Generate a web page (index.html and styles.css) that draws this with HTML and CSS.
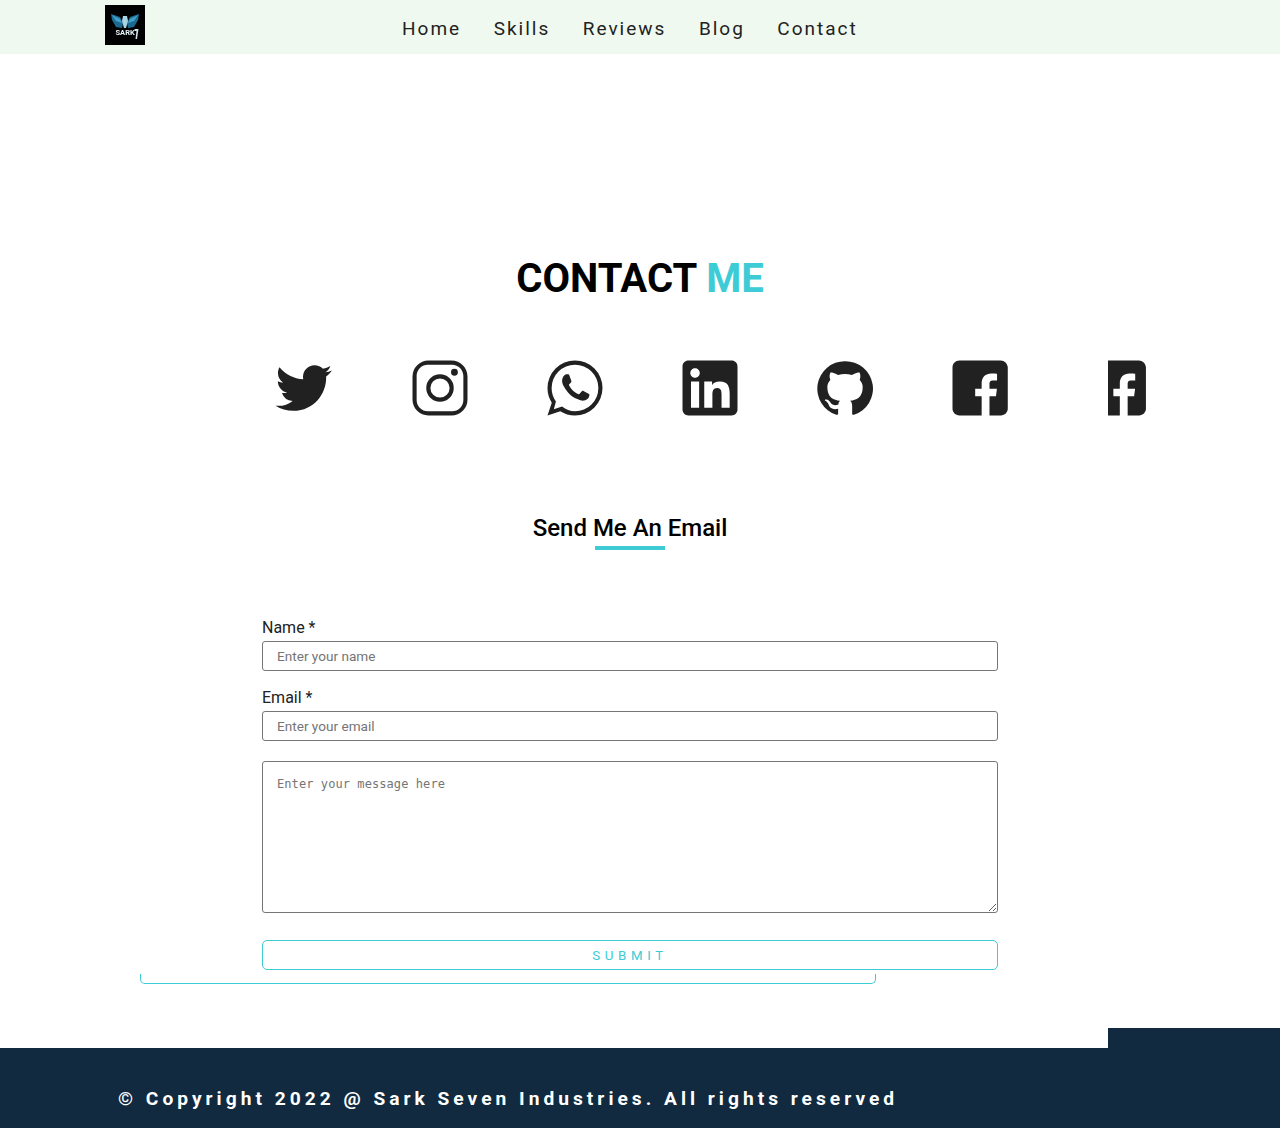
FILE: index.html
```html
<!DOCTYPE html>
<html lang="en">
<head>
  <meta charset="UTF-8" />
  <title>Sark Seven - Contact</title>
  <link rel="stylesheet" href="styles.css">
</head>
<body>

  <nav class="navbar">
    <svg class="logo" viewBox="0 0 40 40">
      <defs>
        <filter id="soft"><feGaussianBlur stdDeviation="0.45" /></filter>
      </defs>
      <rect width="40" height="40" fill="#000" />
      <g filter="url(#soft)">
        <path d="M6 9l9 3 3 6-1 5-6-1-4-7z" fill="#1f6a92" />
        <path d="M34 9l-9 3-3 6 1 5 6-1 4-7z" fill="#1f6a92" />
        <path d="M7 10l8 4 2 4-6-2z" fill="#3f9fcb" />
        <path d="M33 10l-8 4-2 4 6-2z" fill="#3f9fcb" />
        <path d="M18 11h4l1 5-2 7h-2l-2-7z" fill="#a8d5e5" />
        <text class="logo-text" x="10.500" y="30">SARK</text>
        <path d="M29.500 24h4l-1.500 10h-1.500l1-8h-2z" fill="#cfe6ee" />
      </g>
    </svg>
    <ul class="nav-links">
      <li>Home</li>
      <li>Skills</li>
      <li>Reviews</li>
      <li>Blog</li>
      <li>Contact</li>
    </ul>
  </nav>

  <section class="contact">
    <h1>CONTACT <span>ME</span></h1>

    <div class="socials">
      <svg class="icon twitter" viewBox="0.580 1.350 22.300 22.300"><path d="M22.460 6c-.77.35-1.600.58-2.460.69.88-.53 1.560-1.370 1.880-2.380-.83.5-1.750.85-2.720 1.050C18.370 4.500 17.260 4 16 4c-2.350 0-4.270 1.920-4.270 4.290 0 .34.04.67.11.98C8.280 9.090 5.110 7.380 3 4.790c-.37.63-.58 1.370-.58 2.150 0 1.490.75 2.810 1.910 3.560-.71 0-1.370-.2-1.950-.5v.03c0 2.080 1.480 3.820 3.440 4.210a4.220 4.220 0 0 1-1.930.07 4.280 4.280 0 0 0 4 2.980 8.521 8.521 0 0 1-5.330 1.840c-.34 0-.68-.02-1.020-.06C3.440 20.290 5.700 21 8.120 21 16 21 20.330 14.460 20.330 8.790c0-.19 0-.37-.01-.56.84-.6 1.560-1.360 2.140-2.230z"/></svg>
      <svg class="icon" viewBox="1.090 1.090 21.820 21.820"><path d="M7.800 2h8.400C19.400 2 22 4.600 22 7.800v8.400a5.800 5.800 0 0 1-5.800 5.800H7.800C4.600 22 2 19.400 2 16.200V7.800A5.800 5.800 0 0 1 7.800 2m-.2 1.500A4.100 4.100 0 0 0 3.500 7.600v8.800c0 2.270 1.830 4.100 4.100 4.100h8.800a4.100 4.100 0 0 0 4.100-4.100V7.600c0-2.270-1.830-4.100-4.100-4.100H7.600m9.650 1.500a1.250 1.250 0 0 1 1.250 1.250A1.250 1.250 0 0 1 17.250 7.500 1.250 1.250 0 0 1 16 6.250a1.250 1.250 0 0 1 1.250-1.250M12 7a5 5 0 0 1 5 5 5 5 0 0 1-5 5 5 5 0 0 1-5-5 5 5 0 0 1 5-5m0 1.500a3.500 3.500 0 0 0-3.500 3.500 3.500 3.500 0 0 0 3.500 3.500 3.500 3.500 0 0 0 3.500-3.500 3.500 3.500 0 0 0-3.500-3.500z"/></svg>
      <svg class="icon" viewBox="1.090 1.090 21.820 21.820"><path d="M16.750 13.960c.25.13.41.2.46.3.06.11.04.61-.21 1.180-.2.56-1.240 1.100-1.700 1.120-.46.02-.47.36-2.960-.73-2.490-1.090-3.990-3.750-4.110-3.920-.12-.17-.96-1.380-.92-2.610.05-1.220.69-1.800.95-2.040.24-.26.51-.29.68-.26h.47c.15 0 .36-.06.55.45l.69 1.870c.06.13.1.28.01.44l-.27.41-.39.42c-.12.12-.26.25-.12.5.12.26.62 1.090 1.320 1.780.91.88 1.710 1.170 1.950 1.300.24.14.39.12.54-.04l.81-.94c.19-.25.35-.19.58-.11l1.670.88M12 2a10 10 0 0 1 10 10 10 10 0 0 1-10 10c-1.970 0-3.800-.57-5.350-1.550L2 22l1.550-4.650A9.969 9.969 0 0 1 2 12 10 10 0 0 1 12 2m0 1.500a8.500 8.500 0 0 0-8.500 8.500c0 1.830.58 3.520 1.560 4.900L4.300 19.700l2.990-.96A8.450 8.450 0 0 0 12 20.500a8.500 8.500 0 0 0 8.500-8.500 8.500 8.500 0 0 0-8.500-8.500z"/></svg>
      <svg class="icon" viewBox="-20.400 11.600 488.700 488.700"><path d="M400 32H48C21.500 32 0 53.500 0 80v352c0 26.500 21.500 48 48 48h352c26.500 0 48-21.500 48-48V80c0-26.500-21.500-48-48-48zM135.400 416H69V202.200h66.500V416zm-33.200-243c-21.300 0-38.500-17.300-38.500-38.500S80.900 96 102.200 96c21.200 0 38.500 17.300 38.500 38.500 0 21.300-17.200 38.500-38.500 38.500zm282.100 243h-66.400V312c0-24.800-.5-56.700-34.500-56.700-34.600 0-39.900 27-39.900 54.900V416h-66.400V202.200h63.700v29.200h.9c8.900-16.800 30.600-27.700 62.900-27.700 67.200 0 79.700 44.300 79.700 101.900V416z"/></svg>
      <svg class="icon" viewBox="0 0 24 24"><path d="M12 1.270a11 11 0 0 0-3.480 21.460c.55.09.73-.28.73-.55v-1.840c-3.030.64-3.670-1.460-3.670-1.460-.55-1.290-1.280-1.650-1.280-1.650-.92-.65.1-.65.1-.65 1.100 0 1.730 1.100 1.730 1.100.92 1.650 2.570 1.200 3.210.92a2 2 0 0 1 .64-1.470c-2.470-.27-5.040-1.190-5.040-5.500 0-1.100.46-2.100 1.200-2.840a3.760 3.760 0 0 1 0-2.930s.91-.28 3.110.92c1.810-.49 3.710-.49 5.520 0 2.200-1.200 3.100-.92 3.100-.92.37.95.37 2 .01 2.930.74.74 1.200 1.740 1.200 2.840 0 4.300-2.580 5.230-5.040 5.500.45.37.82.92.82 2.020v3.030c0 .27.1.64.73.55A11 11 0 0 0 12 1.270"/></svg>
      <svg class="icon" viewBox="1.090 1.090 21.820 21.820"><path d="M19.500 2h-15C3.100 2 2 3.100 2 4.500v15C2 20.900 3.100 22 4.500 22h8.100v-7h-2.350v-2.700h2.350v-2c0-2.330 1.420-3.600 3.500-3.600 1 0 1.850.08 2.100.1v2.440h-1.400c-1.130 0-1.350.53-1.350 1.320v1.730h2.700l-.35 2.700h-2.350v7h4.150c1.400 0 2.500-1.100 2.500-2.500v-15C22 3.100 20.900 2 19.500 2z"/></svg>
      <svg class="icon cut" viewBox="8.300 1.090 14.550 21.820"><path d="M19.500 2h-15C3.100 2 2 3.100 2 4.500v15C2 20.900 3.100 22 4.500 22h8.100v-7h-2.350v-2.700h2.350v-2c0-2.330 1.420-3.600 3.500-3.600 1 0 1.850.08 2.100.1v2.440h-1.400c-1.130 0-1.350.53-1.350 1.320v1.730h2.700l-.35 2.700h-2.350v7h4.150c1.400 0 2.500-1.100 2.500-2.500v-15C22 3.100 20.900 2 19.500 2z"/></svg>
    </div>

    <h2>Send Me An Email</h2>
    <div class="underline"></div>

    <form class="email-form">
      <label for="name">Name *</label>
      <input type="text" id="name" placeholder="Enter your name" />
      <label for="email">Email *</label>
      <input type="text" id="email" placeholder="Enter your email" />
      <textarea placeholder="Enter your message here"></textarea>
      <button type="button">SUBMIT</button>
      <div class="stray-btn"></div>
    </form>
  </section>

  <footer class="footer">
    <p>© Copyright 2022 @ Sark Seven Industries. All rights reserved</p>
  </footer>

</body>
</html>
```

FILE: styles.css
```css
* {
  box-sizing: border-box;
}

body {
  margin: 0;
  font-family: Roboto, sans-serif;
  background: #fff;
  color: #000;
  overflow: hidden;
}

.navbar {
  display: flex;
  height: 54px;
  padding: 5px 0 0 105px;
  background: #eff9ef;
}

.logo {
  width: 40px;
  height: 40px;
}

.logo-text {
  font-family: Roboto, sans-serif;
  font-size: 7.500px;
  font-weight: 700;
  fill: #e6f2f6;
}

.nav-links {
  display: flex;
  gap: 32.500px;
  list-style: none;
  margin: 0 0 0 257px;
  padding: 13px 0 0;
  font-size: 19px;
  font-weight: 400;
  letter-spacing: 2px;
  line-height: 22px;
  color: #222;
}

.contact {
  height: 994px;
  padding-top: 201px;
}

h1 {
  margin: 0;
  font-size: 40px;
  line-height: 48px;
  font-weight: 700;
  text-align: center;
}

h1 span {
  color: #3dccd6;
}

.socials {
  display: flex;
  margin-top: 55px;
  padding-left: 273px;
}

.icon {
  width: 60px;
  height: 60px;
  margin-left: 75px;
  fill: #212121;
}

.icon.twitter {
  margin: 0 2px 0 0;
}

.icon.cut {
  width: 40px;
  margin-left: 98px;
}

h2 {
  margin: 94px 0 0;
  width: 1260px;
  font-size: 24px;
  line-height: 32px;
  font-weight: 500;
  text-align: center;
}

.underline {
  width: 70px;
  height: 4px;
  margin: 2px 0 0 595px;
  background: #3dccd6;
}

.email-form {
  position: relative;
  width: 736px;
  margin: 68px 0 0 262px;
}

label {
  display: block;
  font-size: 16px;
  line-height: 20px;
  color: #222;
  margin-bottom: 3px;
}

input, textarea {
  display: block;
  width: 100%;
  border: 1px solid #767676;
  border-radius: 3px;
  background: #fff;
}

input {
  height: 30px;
  padding: 0 14px;
  margin-bottom: 17px;
  font-family: Roboto, sans-serif;
  font-size: 13.600px;
}

textarea {
  height: 152px;
  margin-top: 20px;
  padding: 15px 14px;
  font-family: "DejaVu Sans Mono", monospace;
  font-size: 12px;
  letter-spacing: .08px;
}

button {
  display: block;
  width: 100%;
  height: 30px;
  margin-top: 27px;
  border: 1px solid #3dccd6;
  border-radius: 5px;
  background: #fff;
  color: #3dccd6;
  font-family: Roboto, sans-serif;
  font-size: 13.330px;
  letter-spacing: 4.600px;
}

.stray-btn {
  position: absolute;
  left: -122px;
  bottom: -14px;
  width: 736px;
  height: 10px;
  border: 1px solid #3dccd6;
  border-top: none;
  border-radius: 0 0 5px 5px;
}

.footer {
  position: relative;
  height: 80px;
  padding: 39px 0 0 118px;
  background: #112a40;
}

.footer::before {
  content: "";
  position: absolute;
  right: 0;
  top: -20px;
  width: 172px;
  height: 20px;
  background: #112a40;
}

.footer p {
  margin: 0;
  font-size: 19.200px;
  line-height: 24px;
  font-weight: 700;
  letter-spacing: 4px;
  color: #fff;
}
```
